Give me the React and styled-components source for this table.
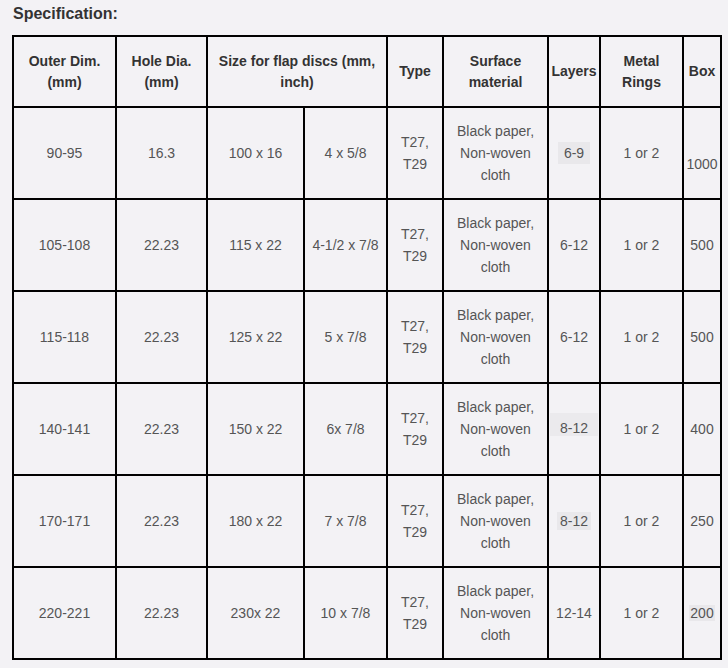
import React from 'react';
import styled, { createGlobalStyle } from 'styled-components';

const GlobalStyle = createGlobalStyle`
  html, body {
    margin: 0;
    padding: 0;
    background: #f3f2f5;
  }
  body {
    font-family: "Liberation Sans", Arial, sans-serif;
  }
`;

const rows = [
  { outer: '90-95', hole: '16.3', mm: '100 x 16', inch: '4 x 5/8', layers: '6-9', layersPad: '3px 6px', box: '1000', boxLow: true },
  { outer: '105-108', hole: '22.23', mm: '115 x 22', inch: '4-1/2 x 7/8', layers: '6-12', box: '500' },
  { outer: '115-118', hole: '22.23', mm: '125 x 22', inch: '5 x 7/8', layers: '6-12', box: '500' },
  { outer: '140-141', hole: '22.23', mm: '150 x 22', inch: '6x 7/8', layers: '8-12', layersWide: true, box: '400' },
  { outer: '170-171', hole: '22.23', mm: '180 x 22', inch: '7 x 7/8', layers: '8-12', layersPad: '1px 3px', box: '250' },
  { outer: '220-221', hole: '22.23', mm: '230x 22', inch: '10 x 7/8', layers: '12-14', box: '200', boxMark: true },
];

const widths = [103, 91, 97, 83, 56, 105, 52, 83, 38];

function App() {
  return (
    <Page>
      <GlobalStyle />
      <Title>Specification:</Title>
      <Table>
        <colgroup>
          {widths.map((w, i) => (
            <col key={i} style={{ width: w }} />
          ))}
        </colgroup>
        <thead>
          <tr>
            <Head>Outer Dim.<br />(mm)</Head>
            <Head>Hole Dia.<br />(mm)</Head>
            <Head colSpan={2}>Size for flap discs (mm,<br />inch)</Head>
            <Head>Type</Head>
            <Head>Surface<br />material</Head>
            <Head>Layers</Head>
            <Head>Metal<br />Rings</Head>
            <Head>Box</Head>
          </tr>
        </thead>
        <tbody>
          {rows.map((r) => (
            <tr key={r.outer}>
              <Cell>{r.outer}</Cell>
              <Cell>{r.hole}</Cell>
              <Cell>{r.mm}</Cell>
              <Cell>{r.inch}</Cell>
              <Cell>T27,<br />T29</Cell>
              <Cell>Black paper,<br />Non-woven<br />cloth</Cell>
              <Cell>
                {r.layersPad && <Mark $pad={r.layersPad}>{r.layers}</Mark>}
                {r.layersWide && <WideMark>{r.layers}</WideMark>}
                {!r.layersPad && !r.layersWide && r.layers}
              </Cell>
              <Cell>1 or 2</Cell>
              <BoxCell $low={r.boxLow}>
                {r.boxMark ? <Mark $pad="0 1px">{r.box}</Mark> : r.box}
              </BoxCell>
            </tr>
          ))}
        </tbody>
      </Table>
    </Page>
  );
}

export default App;

const Page = styled.div`
  padding: 4px 0 0 12px;
  width: 716px;
  height: 664px;
`;

const Title = styled.div`
  font-size: 16px;
  font-weight: bold;
  color: #333;
  line-height: 20px;
  margin-bottom: 11px;
  padding-left: 1px;
`;

const Table = styled.table`
  border-collapse: collapse;
  table-layout: fixed;
  width: 710px;
  border: 2px solid #000;
`;

const Head = styled.th`
  border: 2px solid #000;
  height: 69px;
  padding: 0 2px;
  font-size: 14px;
  font-weight: bold;
  line-height: 21px;
  color: #333;
  text-align: center;
  vertical-align: middle;
`;

const Cell = styled.td`
  border: 2px solid #000;
  height: 90px;
  padding: 0 2px;
  font-size: 14px;
  line-height: 22px;
  color: #555;
  text-align: center;
  vertical-align: middle;
`;

const BoxCell = styled(Cell)`
  padding: ${({ $low }) => ($low ? '22px 0 0' : '0')};
  height: ${({ $low }) => ($low ? '68px' : '90px')};
`;

const Mark = styled.span`
  background: #e9e8eb;
  padding: ${({ $pad }) => $pad};
`;

const WideMark = styled.span`
  display: block;
  height: 23px;
  margin: -9px -1px 0;
  background: #ebeaed;
  line-height: 31px;
`;
